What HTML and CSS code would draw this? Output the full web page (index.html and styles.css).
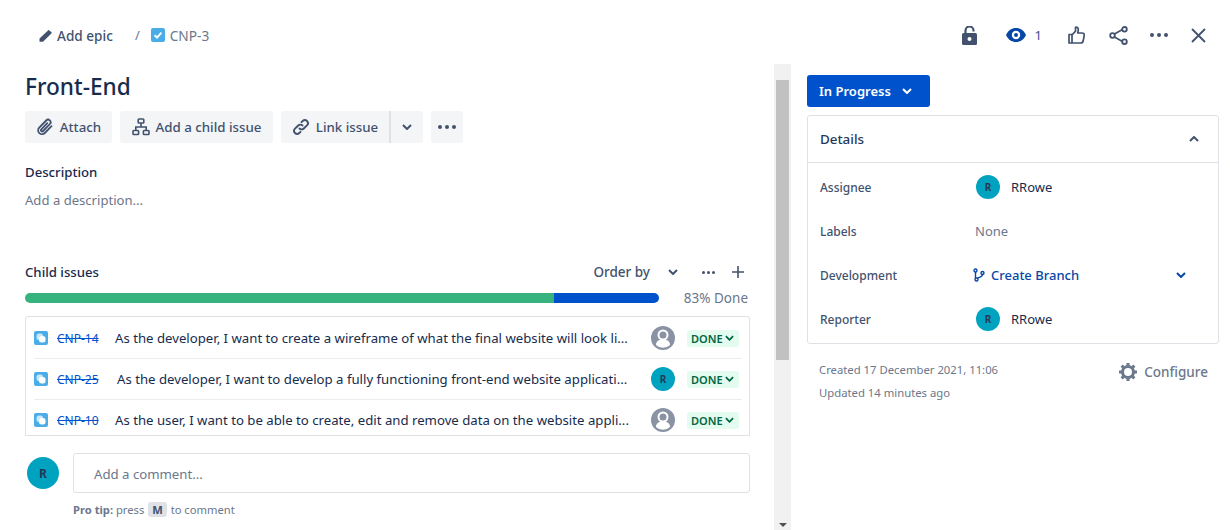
FILE: index.html
```html
<!doctype html>
<html>
  <head>
    <meta charset="utf-8"/>
    <title>CNP-3 Front-End</title>
    <link rel="stylesheet" href="styles.css">
  </head>
  <body>
    <header class="topbar">
      <div class="crumbs">
        <span class="epic">
          <svg class="ico16" viewBox="1 2 13 13"><path d="M1.500 11.400 10 3.400a1 1 0 0 1 1.400 0l2 1.800a1 1 0 0 1 0 1.400L5 14.800H1.500z" fill="#42526e"/></svg>
          Add epic
        </span>
        <span class="slash">/</span>
        <svg class="ico14" viewBox="0 0 14 14"><rect width="14" height="14" rx="2" fill="#4bade8"/><path d="M3.6 7.2 6 9.6l4.4-5" fill="none" stroke="#fff" stroke-width="2"/></svg>
        <span class="key">CNP-3</span>
      </div>
      <div class="actions">
        <svg class="act act-lock" viewBox="0 0 15 19"><rect x="0" y="7" width="15" height="12" rx="1.500" fill="#42526e"/><path d="M3.500 7V4.500a4 4 0 0 1 8 0V5.500" fill="none" stroke="#42526e" stroke-width="2.200"/><circle cx="7.500" cy="13" r="2" fill="#fff"/></svg>
        <span class="watch">
          <svg class="eye" viewBox="0 0 20 14"><path d="M0 7c2-4.400 5.800-7 10-7s8 2.600 10 7c-2 4.400-5.800 7-10 7S2 11.400 0 7z" fill="#0747a6"/><circle cx="10" cy="7" r="4.200" fill="#fff"/><circle cx="10" cy="7" r="2" fill="#0747a6"/></svg>
          <span class="watch-n">1</span>
        </span>
        <svg class="act act-thumb" viewBox="0 0 17 18"><path d="M1 8.500h3V17H1zM4 9l3.500-3.800V1.200c1.800-.5 2.800.8 2.800 2.300 0 1.200-.4 2.500-.6 3.500h4.500c1.300 0 2.300 1 2 2.300l-1 5.500c-.3 1.400-1 2.200-2.400 2.200H4" fill="none" stroke="#42526e" stroke-width="1.700" stroke-linejoin="round"/></svg>
        <svg class="act act-share" viewBox="0 0 19 19"><path d="M5 8.200 13.500 3.600M5 10.800l8.500 4.600" stroke="#42526e" stroke-width="1.700"/><circle cx="3.500" cy="9.500" r="2.300" fill="#fff" stroke="#42526e" stroke-width="1.800"/><circle cx="15.500" cy="3.300" r="2.300" fill="#fff" stroke="#42526e" stroke-width="1.800"/><circle cx="15.500" cy="15.700" r="2.300" fill="#fff" stroke="#42526e" stroke-width="1.800"/></svg>
        <span class="dots-dark"><i></i><i></i><i></i></span>
        <svg class="act act-close" viewBox="0 0 15 15"><path d="M1 1l13 13M14 1 1 14" stroke="#42526e" stroke-width="1.800" fill="none"/></svg>
      </div>
    </header>

    <div class="layout">
      <main class="main">
        <h1 class="title">Front-End</h1>
        <div class="toolbar">
          <button class="btn btn-attach">
            <svg class="ico18" viewBox="0 0 18 18"><path d="M15.500 8.200 8.800 15a3.800 3.800 0 0 1-5.600-5.300l7-7.200a2.500 2.500 0 0 1 3.700 3.500l-6.800 7a1.200 1.200 0 0 1-1.800-1.700l6-6.200" fill="none" stroke="#42526e" stroke-width="1.800" stroke-linecap="round"/></svg>
            Attach
          </button>
          <button class="btn btn-child">
            <svg class="ico18" viewBox="0 0 18 18"><g fill="none" stroke="#42526e" stroke-width="1.600"><rect x="6.200" y="1" width="5.600" height="4" rx=".8"/><rect x="1" y="12.500" width="5.600" height="4" rx=".8"/><rect x="11.400" y="12.500" width="5.600" height="4" rx=".8"/><path d="M9 5v4M3.800 12.500V9h10.400v3.500"/></g></svg>
            Add a child issue
          </button>
          <div class="split">
            <button class="btn btn-link">
              <svg class="ico18" viewBox="0 0 18 18"><g fill="none" stroke="#42526e" stroke-width="1.900" stroke-linecap="round"><path d="M7.500 10.500a3 3 0 0 0 4.300 0l3.200-3.200a3 3 0 0 0-4.300-4.300L9.500 4.200"/><path d="M10.500 7.500a3 3 0 0 0-4.300 0L3 10.700A3 3 0 0 0 7.300 15l1.200-1.200"/></g></svg>
              Link issue
            </button>
            <button class="btn btn-caret"><svg class="chev" viewBox="0 0 10 6"><path d="M1 1l4 4 4-4" fill="none" stroke="#42526e" stroke-width="2"/></svg></button>
          </div>
          <button class="btn btn-more"><span class="dots-dark"><i></i><i></i><i></i></span></button>
        </div>

        <h2 class="label label-desc">Description</h2>
        <p class="placeholder">Add a description...</p>

        <div class="child-head">
          <h2 class="label">Child issues</h2>
          <div class="child-tools">
            <span class="order">Order by</span>
            <svg class="chev" viewBox="0 0 10 6"><path d="M1 1l4 4 4-4" fill="none" stroke="#42526e" stroke-width="2"/></svg>
            <span class="dots-small"><i></i><i></i><i></i></span>
            <svg class="plus" viewBox="0 0 12 12"><path d="M6 0v12M0 6h12" stroke="#42526e" stroke-width="1.600"/></svg>
          </div>
        </div>
        <div class="progress-row">
          <div class="progress"><div class="bar-done"></div><div class="bar-prog"></div></div>
          <span class="pct">83% Done</span>
        </div>

        <ul class="issues">
          <li class="issue">
            <svg class="ico14" viewBox="0 0 14 14"><rect width="14" height="14" rx="2" fill="#4bade8"/><rect x="2.500" y="2.500" width="6.500" height="6.500" rx="2.500" fill="#fff" fill-opacity=".7"/><rect x="5" y="5" width="6.500" height="6.500" rx="2.500" fill="#fff"/></svg>
            <a class="issue-key">CNP-14</a>
            <span class="issue-text">As the developer, I want to create a wireframe of what the final website will look li...</span>
            <span class="avatar-none"><svg viewBox="0 0 24 24"><circle cx="12" cy="12" r="12" fill="#8993a4"/><circle cx="12" cy="9" r="4.500" fill="none" stroke="#fff" stroke-width="2"/><path d="M5 19c0-4 3-5.500 7-5.500s7 1.500 7 5.500a10 10 0 0 1-14 0z" fill="#fff"/></svg></span>
            <span class="lozenge">DONE<svg viewBox="0 0 10 6"><path d="M1 1l4 4 4-4" fill="none" stroke="#006644" stroke-width="2"/></svg></span>
          </li>
          <li class="issue">
            <svg class="ico14" viewBox="0 0 14 14"><rect width="14" height="14" rx="2" fill="#4bade8"/><rect x="2.500" y="2.500" width="6.500" height="6.500" rx="2.500" fill="#fff" fill-opacity=".7"/><rect x="5" y="5" width="6.500" height="6.500" rx="2.500" fill="#fff"/></svg>
            <a class="issue-key">CNP-25</a>
            <span class="issue-text issue-text-wide">As the developer, I want to develop a fully functioning front-end website applicati...</span>
            <span class="avatar avatar-24">R</span>
            <span class="lozenge">DONE<svg viewBox="0 0 10 6"><path d="M1 1l4 4 4-4" fill="none" stroke="#006644" stroke-width="2"/></svg></span>
          </li>
          <li class="issue">
            <svg class="ico14" viewBox="0 0 14 14"><rect width="14" height="14" rx="2" fill="#4bade8"/><rect x="2.500" y="2.500" width="6.500" height="6.500" rx="2.500" fill="#fff" fill-opacity=".7"/><rect x="5" y="5" width="6.500" height="6.500" rx="2.500" fill="#fff"/></svg>
            <a class="issue-key">CNP-10</a>
            <span class="issue-text">As the user, I want to be able to create, edit and remove data on the website appli...</span>
            <span class="avatar-none"><svg viewBox="0 0 24 24"><circle cx="12" cy="12" r="12" fill="#8993a4"/><circle cx="12" cy="9" r="4.500" fill="none" stroke="#fff" stroke-width="2"/><path d="M5 19c0-4 3-5.500 7-5.500s7 1.500 7 5.500a10 10 0 0 1-14 0z" fill="#fff"/></svg></span>
            <span class="lozenge">DONE<svg viewBox="0 0 10 6"><path d="M1 1l4 4 4-4" fill="none" stroke="#006644" stroke-width="2"/></svg></span>
          </li>
        </ul>

        <div class="comment">
          <span class="avatar avatar-32">R</span>
          <div class="comment-body">
            <div class="comment-input">Add a comment...</div>
            <p class="tip"><b>Pro tip:</b> press <kbd>M</kbd> to comment</p>
          </div>
        </div>
      </main>

      <div class="scrollbar">
        <span class="arrow-space"></span>
        <div class="thumb"></div>
        <span class="arrow-down"></span>
      </div>

      <aside class="side">
        <button class="status">In Progress
          <svg class="chev" viewBox="0 0 10 6"><path d="M1 1l4 4 4-4" fill="none" stroke="#fff" stroke-width="2"/></svg>
        </button>
        <section class="details">
          <div class="details-head">
            <span>Details</span>
            <svg class="chev" viewBox="0 0 10 6"><path d="M1 5l4-4 4 4" fill="none" stroke="#42526e" stroke-width="2"/></svg>
          </div>
          <div class="details-body">
            <div class="row"><span class="row-label">Assignee</span><span class="person"><span class="avatar avatar-24">R</span>RRowe</span></div>
            <div class="row"><span class="row-label">Labels</span><span class="none">None</span></div>
            <div class="row">
              <span class="row-label">Development</span>
              <span class="branch">
                <svg class="ico-branch" viewBox="0 0 12 14"><g fill="none" stroke="#0747a6" stroke-width="1.400"><circle cx="2.500" cy="2.500" r="1.500"/><circle cx="9.500" cy="5" r="1.500"/><circle cx="3.500" cy="11.500" r="1.500"/><path d="M2.500 4v6M9.500 6.500c0 2.500-3 2.500-5.500 4"/></g></svg>
                Create Branch
              </span>
              <svg class="chev" viewBox="0 0 10 6"><path d="M1 1l4 4 4-4" fill="none" stroke="#0747a6" stroke-width="2"/></svg>
            </div>
            <div class="row"><span class="row-label">Reporter</span><span class="person"><span class="avatar avatar-24">R</span>RRowe</span></div>
          </div>
        </section>
        <div class="meta">
          <div class="dates">
            <p>Created 17 December 2021, 11:06</p>
            <p>Updated 14 minutes ago</p>
          </div>
          <span class="configure">
            <svg class="ico18" viewBox="0 0 18 18"><circle cx="9" cy="9" r="5.500" fill="none" stroke="#6b778c" stroke-width="3"/><path d="M9 0v3M9 15v3M0 9h3M15 9h3M2.600 2.600l2.200 2.200M13.200 13.200l2.200 2.200M15.400 2.600l-2.200 2.200M4.800 13.200l-2.200 2.200" stroke="#6b778c" stroke-width="3"/></svg>
            Configure
          </span>
        </div>
      </aside>
    </div>
  </body>
</html>
```

FILE: styles.css
```css
* {
  padding: 0;
  margin: 0;
  box-sizing: border-box;
}

html, body {
  height: 100%;
  overflow: hidden;
}

body {
  background: #fff;
  color: #172b4d;
  font-family: "Noto Sans", "Open Sans", sans-serif;
  font-size: 13px;
}

svg {
  display: block;
  flex: none;
}

/* top bar */
.topbar {
  height: 64px;
  padding: 6px 24.5px 0 39px;
  display: flex;
  justify-content: space-between;
  align-items: center;
}

.crumbs, .actions, .epic, .watch {
  display: flex;
  align-items: center;
}

.epic {
  gap: 5px;
  color: #42526e;
  font-weight: 500;
  font-size: 13.6px;
}

.slash {
  margin: 0 11px 0 22px;
  color: #6b778c;
}

.key {
  margin-left: 5px;
  color: #6b778c;
  font-size: 13.7px;
}

.ico14 { width: 14px; height: 14px; }
.ico16 { width: 13px; height: 13px; }
.ico18 { width: 18px; height: 18px; }

.act-lock { width: 15px; height: 19px; margin-right: 29px; }
.eye { width: 20px; height: 14px; }
.watch { gap: 9px; margin-right: 26.5px; width: 36px; }
.watch-n { color: #3a4f8f; }
.act-thumb { width: 17px; height: 18px; margin-right: 24px; }
.act-share { width: 19px; height: 19px; margin-right: 21.5px; }
.act-close { width: 15px; height: 15px; margin-left: 23px; }

.dots-dark, .dots-small {
  display: inline-flex;
  gap: 3px;
}

.dots-dark i, .dots-small i {
  display: block;
  width: 4px;
  height: 4px;
  border-radius: 50%;
  background: #42526e;
}

.dots-small { gap: 2px; }
.dots-small i { width: 3px; height: 3px; }

/* two columns */
.layout {
  display: flex;
  height: 466px;
}

.main {
  width: 725px;
  margin-left: 25px;
  margin-right: 24px;
  flex: none;
}

.title {
  font-size: 22.6px;
  line-height: 32px;
  font-weight: 500;
  margin-top: 7px;
  color: #172b4d;
}

.toolbar {
  display: flex;
  gap: 8px;
  margin-top: 8px;
}

.btn {
  height: 32px;
  border: 0;
  border-radius: 3px;
  background: #f4f5f7;
  color: #42526e;
  font: 500 13.3px "Noto Sans", sans-serif;
  display: flex;
  align-items: center;
  justify-content: center;
  gap: 6px;
}

.btn-attach { width: 87px; }
.btn-child { width: 153px; }
.btn-link { width: 110px; border-right: 2px solid #dfe1e6; border-radius: 3px 0 0 3px; }
.btn-caret { width: 32px; border-radius: 0 3px 3px 0; }
.btn-more { width: 32px; }

.split { display: flex; }

.chev { width: 10px; height: 6px; }

.label {
  font-size: 13.2px;
  font-weight: 500;
  color: #172b4d;
  line-height: 20px;
}

.label-desc { margin-top: 19px; }

.placeholder {
  color: #6b778c;
  line-height: 20px;
  margin-top: 8px;
  font-size: 13.1px;
}

.child-head {
  margin-top: 52px;
  display: flex;
  justify-content: space-between;
  align-items: center;
}

.child-tools {
  display: flex;
  align-items: center;
  color: #42526e;
  margin-right: 6px;
}

.order { font-weight: 500; color: #42526e; font-size: 13.5px; margin-right: 18px; }
.dots-small { margin-left: 24px; }
.plus { width: 12px; height: 12px; margin-left: 17px; }

.progress-row {
  display: flex;
  align-items: center;
  justify-content: space-between;
  margin-top: 6px;
  height: 20px;
}

.progress {
  width: 634px;
  height: 10px;
  display: flex;
  border-radius: 5px;
  overflow: hidden;
}

.bar-done { width: 529px; background: #36b37e; }
.bar-prog { flex: 1; background: #0052cc; }
.pct { color: #6b778c; margin-right: 2px; font-size: 13.5px; }

/* child issue list */
.issues {
  list-style: none;
  margin-top: 8px;
  border: 1px solid #dfe1e6;
  border-radius: 3px 3px 0 0;
  padding: 1px 7px 0 8px;
  height: 120px;
}

.issue {
  height: 41px;
  display: flex;
  align-items: center;
  border-bottom: 1px solid #ebecf0;
  padding-right: 3px;
}

.issue:last-child { border-bottom: 0; height: 40px; }

.issue-key {
  margin-left: 9px;
  width: 49px;
  flex: none;
  color: #0052cc;
  font-size: 12px;
  text-decoration: line-through;
}

.issue-text {
  margin-left: 9px;
  flex: 1;
  min-width: 0;
  white-space: nowrap;
  color: #172b4d;
  font-size: 13.2px;
}

.issue-text-wide { margin-left: 11px; }

.avatar-none { width: 24px; height: 24px; margin-left: 19px; flex: none; }
.issue .avatar { margin-left: 19px; }

.avatar {
  display: inline-flex;
  align-items: center;
  justify-content: center;
  flex: none;
  border-radius: 50%;
  background: #00a3bf;
  color: #253858;
  font-weight: 700;
}

.avatar-24 { width: 24px; height: 24px; font-size: 10px; }
.avatar-32 { width: 32px; height: 32px; font-size: 12px; margin-top: 4px; }

.lozenge {
  margin-left: 12px;
  flex: none;
  width: 52px;
  height: 17px;
  padding-left: 4px;
  display: flex;
  align-items: center;
  gap: 2px;
  border-radius: 3px;
  background: #e3fcef;
  color: #006644;
  font-size: 11px;
  font-weight: 600;
}

.lozenge svg { width: 9px; height: 6px; }

/* comment */
.comment {
  display: flex;
  gap: 14px;
  padding-left: 2px;
  margin-top: 17px;
}

.comment-body { flex: 1; }

.comment-input {
  height: 40px;
  border: 1px solid #dfe1e6;
  border-radius: 3px;
  padding-left: 20px;
  line-height: 40px;
  color: #6b778c;
  font-size: 13.2px;
}

.tip {
  margin-top: 8px;
  font-size: 11.2px;
  color: #6b778c;
  line-height: 18px;
}

kbd {
  font: 700 11.2px "Noto Sans", sans-serif;
  background: #dfe1e6;
  color: #42526e;
  border-radius: 3px;
  padding: 0 4px;
  margin: 0 1px;
}

/* fake page scrollbar */
.scrollbar {
  width: 17px;
  flex: none;
  margin-right: 16px;
  background: #f1f1f1;
  display: flex;
  flex-direction: column;
  padding: 0 2px;
}

.arrow-space { height: 16px; flex: none; }
.thumb { height: 280px; background: #c1c1c1; }

.arrow-down {
  margin-top: auto;
  margin-bottom: 3px;
  align-self: center;
  width: 0;
  height: 0;
  border: 4px solid transparent;
  border-top: 4px solid #505050;
  border-bottom: 0;
}

/* right column */
.side {
  width: 412px;
  flex: none;
  padding-top: 11px;
}

.status {
  width: 123px;
  height: 32px;
  border: 0;
  border-radius: 3px;
  background: #0052cc;
  color: #fff;
  font: 600 13px "Noto Sans", sans-serif;
  display: flex;
  align-items: center;
  padding-left: 12px;
  gap: 11px;
}

.details {
  margin-top: 8px;
  height: 229px;
  border: 1px solid #dfe1e6;
  border-radius: 3px;
}

.details-head {
  height: 47px;
  padding: 0 19px 0 12px;
  display: flex;
  justify-content: space-between;
  align-items: center;
  border-bottom: 1px solid #dfe1e6;
  font-weight: 500;
  font-size: 13.4px;
  color: #253858;
}

.details-body { padding-top: 2px; }

.row {
  height: 44px;
  display: flex;
  align-items: center;
  padding: 0 32px 0 12px;
}

.row-label {
  width: 155px;
  flex: none;
  font-size: 12px;
  font-weight: 500;
  color: #42526e;
}

.person {
  display: flex;
  align-items: center;
  gap: 11px;
  color: #172b4d;
  margin-left: 1px;
}

.none { color: #6b778c; }

.branch {
  flex: 1;
  display: flex;
  align-items: center;
  gap: 6px;
  color: #0747a6;
  font-weight: 500;
  margin-left: -2px;
}

.ico-branch { width: 12px; height: 14px; }

.meta {
  display: flex;
  justify-content: space-between;
  padding: 9px 11px 0 12px;
}

.dates { margin-top: 5px; }

.dates p {
  font-size: 11.3px;
  line-height: 23px;
  color: #6b778c;
}

.configure {
  display: flex;
  align-items: center;
  gap: 7px;
  height: 20px;
  margin-top: 9px;
  color: #6b778c;
  font-size: 13.5px;
  font-weight: 500;
}
```
